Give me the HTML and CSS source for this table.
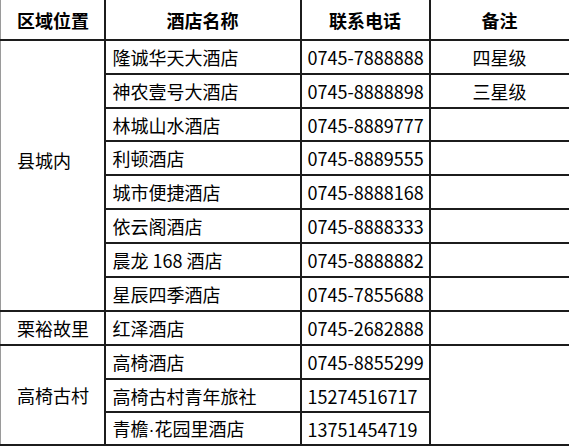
FILE: index.html
```html
<!DOCTYPE html>
<html lang="zh">
<head>
<meta charset="utf-8">
<title>酒店</title>
<link rel="stylesheet" href="styles.css">
</head>
<body>
<table class="hotels">
  <colgroup>
    <col class="c-area">
    <col class="c-name">
    <col class="c-phone">
    <col class="c-note">
  </colgroup>
  <thead>
    <tr class="head">
      <th>区域位置</th>
      <th>酒店名称</th>
      <th>联系电话</th>
      <th>备注</th>
    </tr>
  </thead>
  <tbody>
    <tr>
      <td class="area area-up" rowspan="8">县城内</td>
      <td class="name">隆诚华天大酒店</td>
      <td class="phone">0745-7888888</td>
      <td class="note">四星级</td>
    </tr>
    <tr>
      <td class="name">神农壹号大酒店</td>
      <td class="phone">0745-8888898</td>
      <td class="note">三星级</td>
    </tr>
    <tr class="short">
      <td class="name">林城山水酒店</td>
      <td class="phone">0745-8889777</td>
      <td class="note"></td>
    </tr>
    <tr>
      <td class="name">利顿酒店</td>
      <td class="phone">0745-8889555</td>
      <td class="note"></td>
    </tr>
    <tr>
      <td class="name">城市便捷酒店</td>
      <td class="phone">0745-8888168</td>
      <td class="note"></td>
    </tr>
    <tr>
      <td class="name">依云阁酒店</td>
      <td class="phone">0745-8888333</td>
      <td class="note"></td>
    </tr>
    <tr>
      <td class="name">晨龙 168 酒店</td>
      <td class="phone">0745-8888882</td>
      <td class="note"></td>
    </tr>
    <tr>
      <td class="name">星辰四季酒店</td>
      <td class="phone">0745-7855688</td>
      <td class="note"></td>
    </tr>
    <tr>
      <td class="area">栗裕故里</td>
      <td class="name">红泽酒店</td>
      <td class="phone">0745-2682888</td>
      <td class="note"></td>
    </tr>
    <tr>
      <td class="area" rowspan="3">高椅古村</td>
      <td class="name">高椅酒店</td>
      <td class="phone">0745-8855299</td>
      <td class="note" rowspan="3"></td>
    </tr>
    <tr class="short">
      <td class="name">高椅古村青年旅社</td>
      <td class="phone">15274516717</td>
    </tr>
    <tr class="short">
      <td class="name">青檐<span class="dot">·</span>花园里酒店</td>
      <td class="phone">13751454719</td>
    </tr>
  </tbody>
</table>
</body>
</html>
```

FILE: styles.css
```css
html, body {
  margin: 0;
  padding: 0;
  background: #ffffff;
}

body {
  font-family: "Noto Sans CJK SC", "Noto Sans", sans-serif;
  font-size: 18px;
  color: #000000;
}

.hotels {
  border-collapse: collapse;
  table-layout: fixed;
  width: 569px;
}

.c-area { width: 104px; }
.c-name { width: 196px; }
.c-phone { width: 129px; }
.c-note { width: 140px; }

.hotels th,
.hotels td {
  border: 2px solid #1c1c1c;
  padding: 0;
  line-height: 24px;
  white-space: nowrap;
  overflow: hidden;
  vertical-align: middle;
}

.hotels th:first-child,
.hotels td.area {
  border-left: 1px solid #9a9a9a;
}

.hotels th:last-child,
.hotels td.note {
  border-right: 2px solid #6e6e6e;
}

.hotels thead th {
  border-top: none;
  font-weight: bold;
  text-align: center;
}

.head {
  height: 40px;
}

.hotels tbody tr {
  height: 34px;
}

.hotels tbody tr.short {
  height: 33px;
}

.hotels .head th:first-child {
  text-align: left;
  padding-left: 16px;
}

.hotels td.area {
  padding-left: 16px;
  text-align: left;
}

.hotels td.area-up {
  padding-bottom: 32px;
}

.hotels td.name {
  padding-left: 7px;
}

.hotels td.phone {
  padding-left: 6px;
}

.hotels td.note {
  text-align: center;
}

.dot {
  font-family: "Liberation Sans", sans-serif;
}
```
